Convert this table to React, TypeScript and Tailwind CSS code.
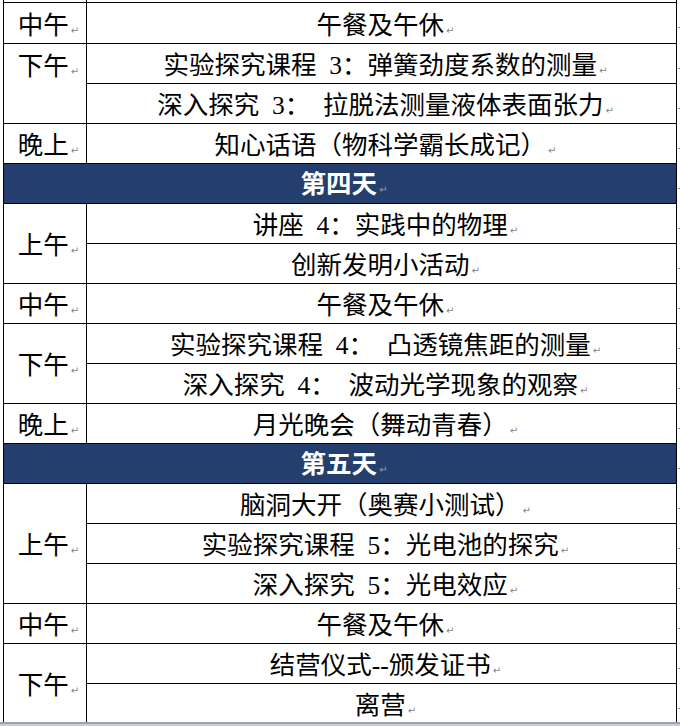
import type { ReactNode } from "react";

const Mark = () => (
  <span className="ml-[2px] font-['DejaVu_Sans',sans-serif] text-[10px] text-[#858585]">↵</span>
);

function Left({ children, className }: { children: ReactNode; className: string }) {
  return (
    <div className={className}>
      <span>
        {children}
        <Mark />
      </span>
    </div>
  );
}

function Right({ children }: { children: ReactNode }) {
  return (
    <div className="flex items-center justify-center whitespace-pre border-r border-b border-black pl-[8px] pt-[5px]">
      <span>
        {children}
        <Mark />
      </span>
    </div>
  );
}

function Day({ children }: { children: ReactNode }) {
  return (
    <div className="col-span-2 flex items-center justify-center border-x border-b border-black bg-[#243f6e] pl-[8px] pt-[3px] font-bold text-white">
      <span>
        {children}
        <Mark />
      </span>
    </div>
  );
}

// row-end marks just right of the table (mostly off screen)
const End = () => (
  <div className="pl-[1px] pt-[20px]">
    <svg width="3" height="7" viewBox="0 0 3 7" className="block">
      <path d="M0 4.5H3M2.5 1V4.5" stroke="#8c8c8c" strokeWidth="1" fill="none" />
    </svg>
  </div>
);

const one = "flex items-center justify-center border-x border-b border-black pl-[7px] pt-[5px]";
const two = "row-span-2 flex items-center justify-center border-x border-b border-black pl-[7px] pt-[5px]";
const twoTop = "row-span-2 flex items-start justify-center border-x border-b border-black pl-[7px] pt-[10px]";
const three = "row-span-3 flex items-center justify-center border-x border-b border-black pl-[7px] pt-[5px]";

export default function App() {
  return (
    <div className="h-[726px] w-[680px] overflow-hidden bg-white font-['Liberation_Serif','Noto_Sans_CJK_SC',serif] text-[25.5px] leading-none text-black">
      <div className="h-[722px] overflow-hidden pl-[3px]">
        <div className="grid grid-cols-[84px_590px_3px] grid-rows-[3px_41px_repeat(17,40px)]">
          <div className="border-x border-b border-black" />
          <div className="border-r border-b border-black" />
          <div />

          <Left className={one}>中午</Left>
          <Right>午餐及午休</Right>
          <End />

          <Left className={twoTop}>下午</Left>
          <Right>{"实验探究课程\u20023：弹簧劲度系数的测量"}</Right>
          <End />
          <Right>{"深入探究\u20023：\u2002拉脱法测量液体表面张力"}</Right>
          <End />

          <Left className={one}>晚上</Left>
          <Right>知心话语（物科学霸长成记）</Right>
          <End />

          <Day>第四天</Day>
          <End />

          <Left className={two}>上午</Left>
          <Right>{"讲座\u20024：实践中的物理"}</Right>
          <End />
          <Right>创新发明小活动</Right>
          <End />

          <Left className={one}>中午</Left>
          <Right>午餐及午休</Right>
          <End />

          <Left className={two}>下午</Left>
          <Right>{"实验探究课程\u20024：\u2002凸透镜焦距的测量"}</Right>
          <End />
          <Right>{"深入探究\u20024：\u2002波动光学现象的观察"}</Right>
          <End />

          <Left className={one}>晚上</Left>
          <Right>月光晚会（舞动青春）</Right>
          <End />

          <Day>第五天</Day>
          <End />

          <Left className={three}>上午</Left>
          <Right>脑洞大开（奥赛小测试）</Right>
          <End />
          <Right>{"实验探究课程\u20025：光电池的探究"}</Right>
          <End />
          <Right>{"深入探究\u20025：光电效应"}</Right>
          <End />

          <Left className={one}>中午</Left>
          <Right>午餐及午休</Right>
          <End />

          <Left className={two}>下午</Left>
          <Right>结营仪式--颁发证书</Right>
          <End />
          <Right>离营</Right>
          <End />
        </div>
      </div>
      <div className="h-[4px] border-t-2 border-[#9ea2a9] bg-[#c9ccd1]" />
    </div>
  );
}
